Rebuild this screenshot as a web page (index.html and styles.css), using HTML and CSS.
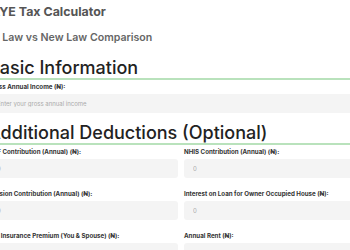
FILE: index.html
```html
<!DOCTYPE html>
<html lang="en">
<head>
    <meta charset="UTF-8">
    <meta name="viewport" content="width=device-width, initial-scale=1.0">
    <title>PAYE Tax Calculator</title>
    <link rel="stylesheet" href="styles.css">
</head>
<body>
    <div class="page">
        <div class="header">
            <h1>PAYE Tax Calculator</h1>
            <p class="subtitle">Old Law vs New Law Comparison</p>
        </div>

        <div class="section">
            <h2>Basic Information</h2>
            <div class="field">
                <label for="gross">Gross Annual Income (₦):</label>
                <input type="number" id="gross" placeholder="Enter your gross annual income">
            </div>
        </div>

        <div class="section">
            <h2>Additional Deductions (Optional)</h2>
            <div class="grid">
                <div class="field">
                    <label for="nhf">NHF Contribution (Annual) (₦):</label>
                    <input type="number" id="nhf" placeholder="0">
                </div>
                <div class="field">
                    <label for="nhis">NHIS Contribution (Annual) (₦):</label>
                    <input type="number" id="nhis" placeholder="0">
                </div>
                <div class="field">
                    <label for="pension">Pension Contribution (Annual) (₦):</label>
                    <input type="number" id="pension" placeholder="0">
                </div>
                <div class="field">
                    <label for="interest">Interest on Loan for Owner Occupied House (₦):</label>
                    <input type="number" id="interest" placeholder="0">
                </div>
                <div class="field">
                    <label for="insurance">Life Insurance Premium (You &amp; Spouse) (₦):</label>
                    <input type="number" id="insurance" placeholder="0">
                </div>
                <div class="field">
                    <label for="rent">Annual Rent (₦):</label>
                    <input type="number" id="rent" placeholder="0">
                </div>
            </div>
        </div>
    </div>
</body>
</html>
```

FILE: styles.css
```css
body {
    font-family: Inter, "Noto Sans", sans-serif;
    background-color: #fff;
    margin: 0;
    overflow: hidden;
}
.page {
    margin-left: -12px;
    width: 386px;
}
.header {
    padding-top: 4px;
}
h1 {
    font-size: 12.4px;
    font-weight: 700;
    color: #555;
    margin: 0 0 0 -4px;
    line-height: 16px;
}
.subtitle {
    font-size: 10.6px;
    font-weight: 600;
    color: #666;
    margin: 11px 0 0 -6px;
    line-height: 14px;
}
.section {
    margin-top: 12px;
}
.section + .section {
    margin-top: 9px;
}
h2 {
    font-size: 18px;
    font-weight: 500;
    color: #222;
    margin: 0 0 2px;
    line-height: 21px;
    border-bottom: 2px solid #b9e2bc;
}
.field label {
    display: block;
    font-size: 6.2px;
    font-weight: 700;
    color: #333;
    line-height: 10px;
    margin-bottom: 2px;
}
.field input {
    display: block;
    width: 100%;
    box-sizing: border-box;
    height: 19px;
    padding: 0 9px;
    border: none;
    border-radius: 3px;
    background-color: #f4f4f4;
    font-family: inherit;
    font-size: 6px;
    color: #999;
}
.field input::placeholder {
    color: #aaa;
}
.grid {
    display: grid;
    grid-template-columns: 1fr 1fr;
    column-gap: 6px;
    row-gap: 11px;
}
```
